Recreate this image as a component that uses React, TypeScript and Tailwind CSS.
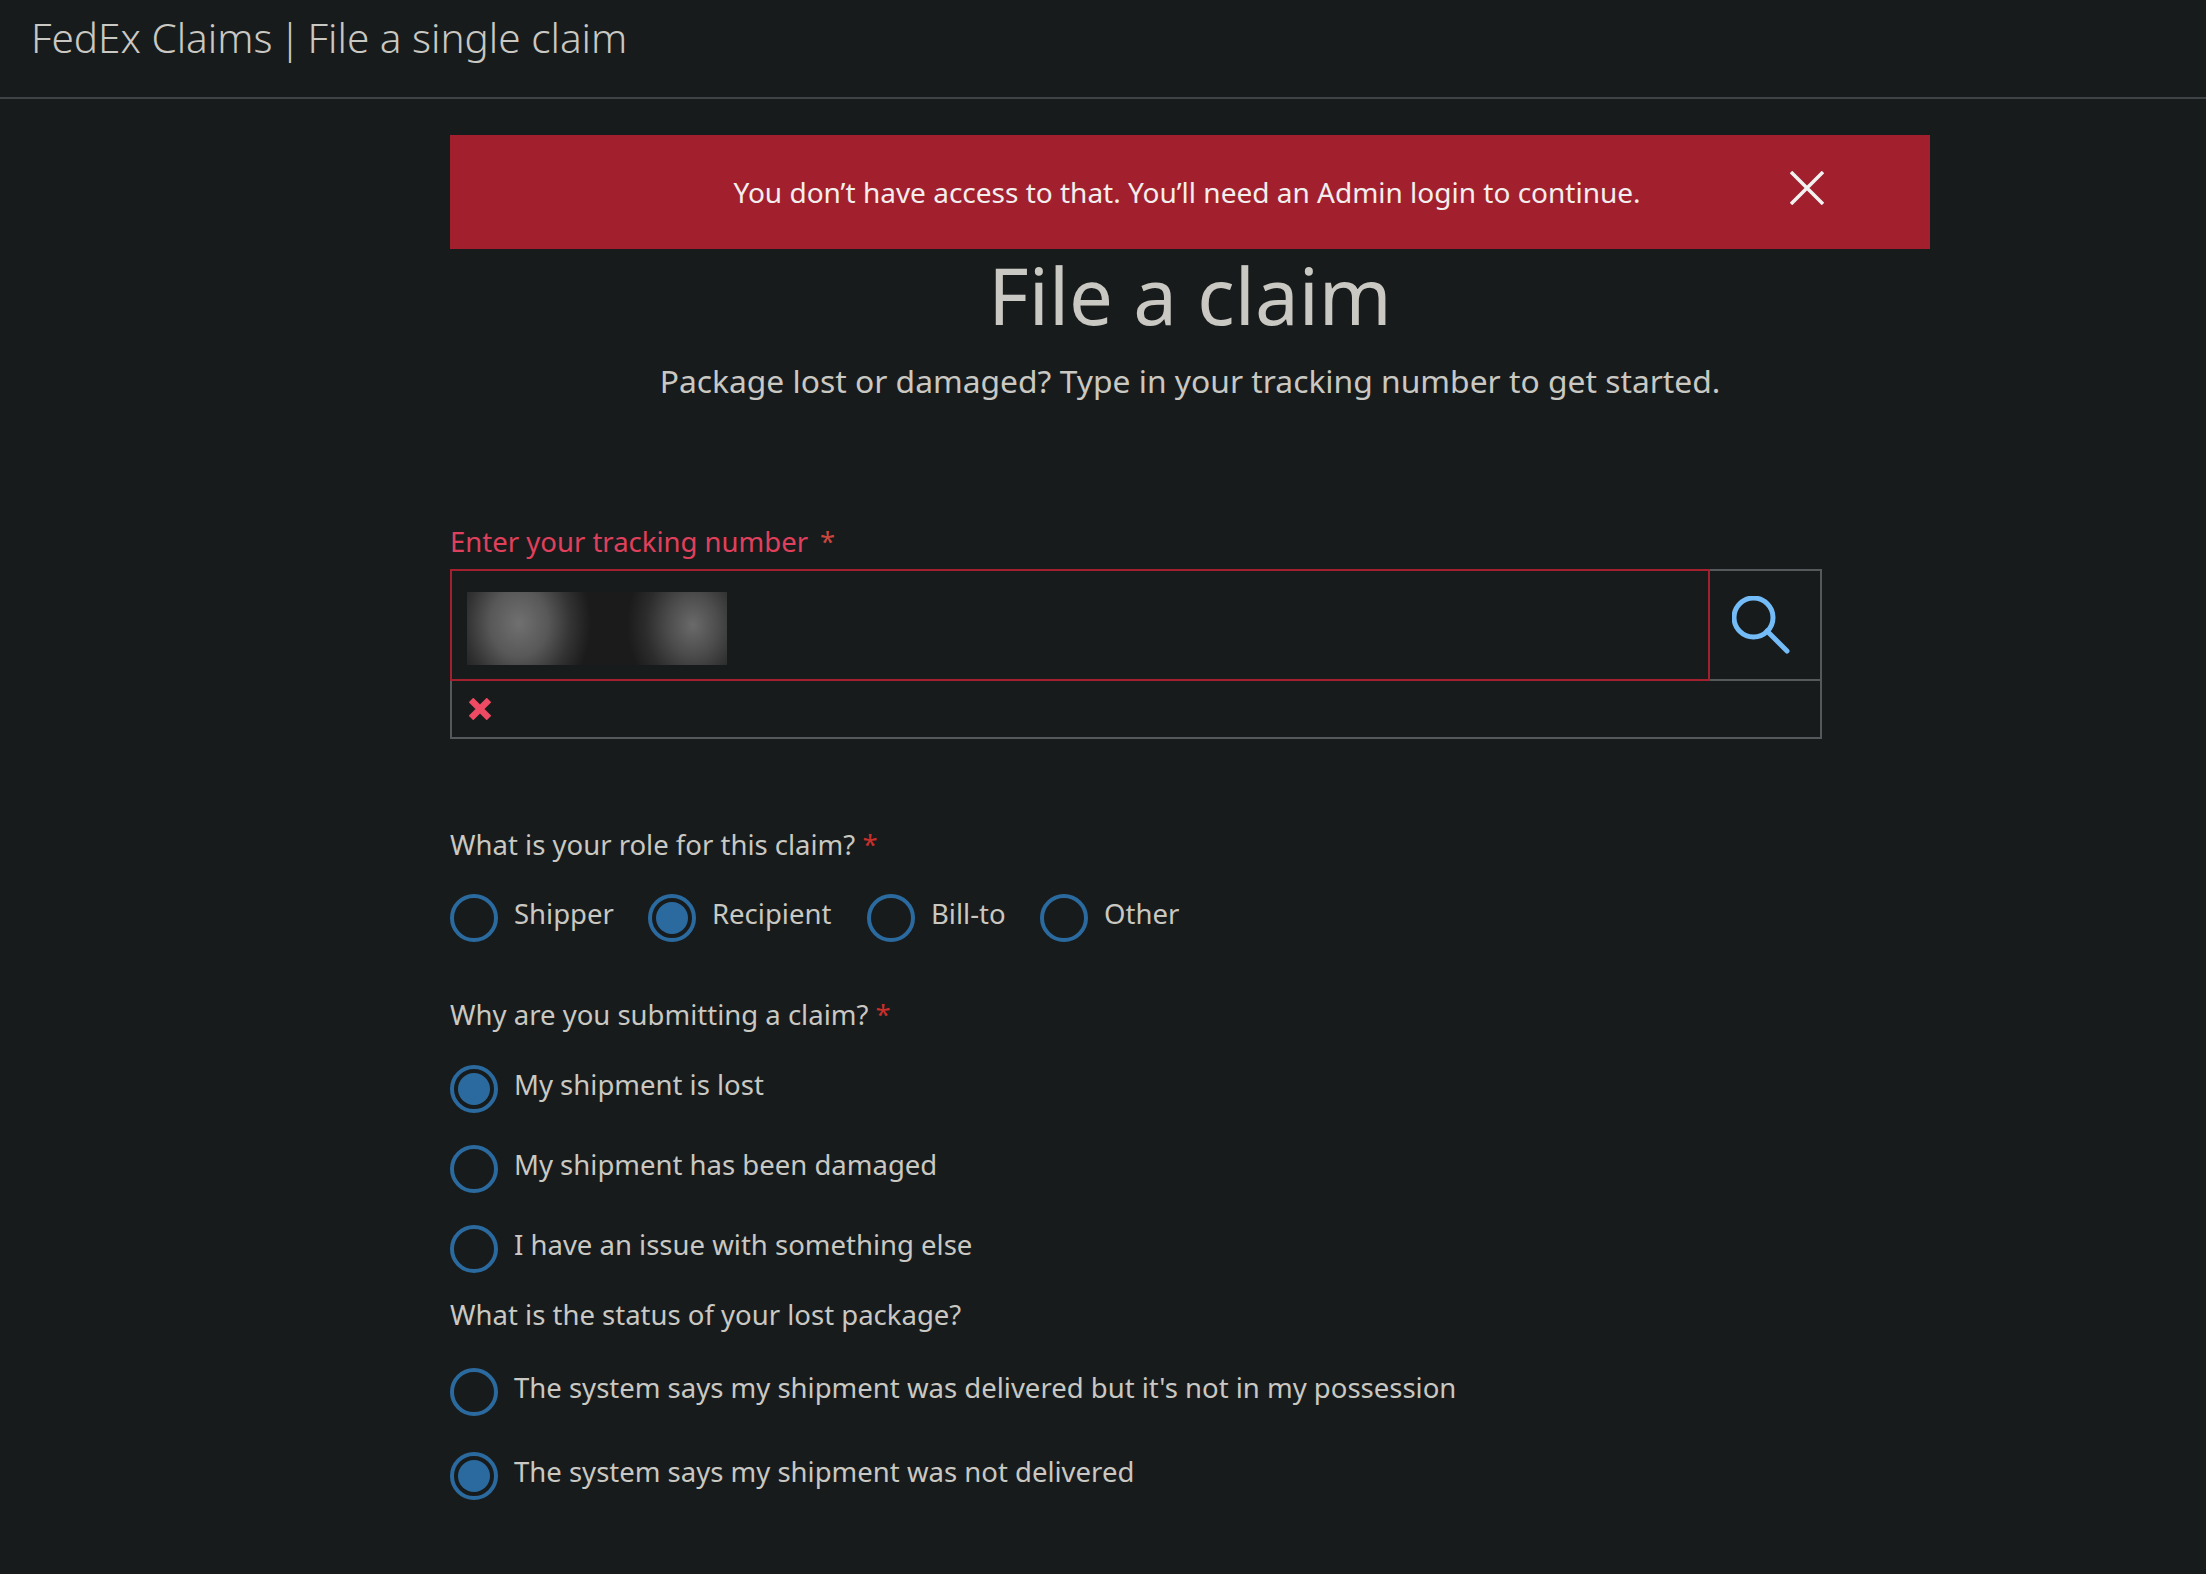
// App.tsx
const font = "font-['Noto_Sans',sans-serif]";

function Radio({ label, checked = false, className = "" }: { label: string; checked?: boolean; className?: string }) {
  return (
    <label className={`flex items-start gap-4 ${className}`}>
      <span className="flex h-12 w-12 shrink-0 items-center justify-center rounded-full border-4 border-[#2b6a9f]">
        {checked && <span className="h-8 w-8 rounded-full bg-[#2b6a9f]" />}
      </span>
      <span className="text-[27.5px] leading-10">{label}</span>
    </label>
  );
}

export default function App() {
  return (
    <div className={`${font} min-h-[1574px] bg-[#181b1c] text-[#c9c8c2]`}>
      <header className="h-[99px] border-b-2 border-[#3f4345] pl-[31px] pt-[15px]">
        <h1 className="text-[40.5px] font-light leading-[46px]">
          FedEx Claims<span className="mx-[-4px]"> | </span>File a single claim
        </h1>
      </header>

      <main className="ml-[450px] w-[1480px] pt-[36px]">
        <div className="relative flex h-[114px] items-center justify-center bg-[#a2202d] pr-[6px] text-[28px] text-[#f2eeee]">
          You don’t have access to that. You’ll need an Admin login to continue.
          <svg className="absolute left-[1340px] top-[36px]" width="34" height="34" viewBox="0 0 34 34" fill="none" stroke="#f2f2f2" strokeWidth="3.5">
            <path d="M1 1 33 33M33 1 1 33" />
          </svg>
        </div>

        <div className="text-center">
          <h2 className="text-[78px] leading-[92px]">File a claim</h2>
          <p className="mt-[18px] text-[31.8px] leading-[44px]">Package lost or damaged? Type in your tracking number to get started.</p>
        </div>

        <div className="mt-[119px] w-[1372px]">
          <div className="flex h-10 items-center text-[27.5px] leading-10 text-[#e0405c]">
            Enter your tracking number
            <span className="ml-3 text-[#c9473c]">*</span>
          </div>
          <div className="mt-[7px] flex h-[112px]">
            <div className="h-full w-[1260px] border-2 border-[#a3212e] pl-[15px] pt-[21px]">
              <div className="h-[73px] w-[260px] bg-[#1c1b1c] bg-[radial-gradient(ellipse_72px_85px_at_52px_31px,#707070_0,#585858_40%,#333_72%,transparent_100%),radial-gradient(ellipse_66px_80px_at_226px_33px,#6a6a6a_0,#4c4c4c_38%,#2c2c2c_72%,transparent_100%)]" />
            </div>
            <button className="flex h-full w-[112px] items-center justify-center border-y-2 border-r-2 border-[#55595b] pr-[8px]">
              <svg width="58" height="58" viewBox="0 0 58 58" fill="none" stroke="#73bcf7" strokeWidth="5" strokeLinecap="round">
                <circle cx="21.5" cy="21.5" r="19.5" />
                <path d="M35 35 55 55" />
              </svg>
            </button>
          </div>
          <div className="flex h-[58px] items-center border-x-2 border-b-2 border-[#55595b] pl-[17px]">
            <svg width="22" height="22" viewBox="0 0 22 22" stroke="#ef4a63" strokeWidth="6.5">
              <path d="M2 2 20 20M20 2 2 20" />
            </svg>
          </div>
        </div>

        <div className="mt-[86px] h-10 text-[27.5px] leading-10">
          What is your role for this claim? <span className="text-[#c9302c]">*</span>
        </div>
        <div className="mt-[29px] flex">
          <Radio className="w-[198px]" label="Shipper" />
          <Radio className="w-[219px]" label="Recipient" checked />
          <Radio className="w-[173px]" label="Bill-to" />
          <Radio label="Other" />
        </div>

        <div className="mt-[53px] h-10 text-[27.5px] leading-10">
          Why are you submitting a claim? <span className="text-[#c9302c]">*</span>
        </div>
        <div className="mt-[30px] flex flex-col gap-[32px]">
          <Radio label="My shipment is lost" checked />
          <Radio label="My shipment has been damaged" />
          <Radio label="I have an issue with something else" />
        </div>

        <div className="mt-[22px] h-10 text-[27.5px] leading-10">What is the status of your lost package?</div>
        <div className="mt-[33px] flex flex-col gap-[36px]">
          <Radio label="The system says my shipment was delivered but it's not in my possession" />
          <Radio label="The system says my shipment was not delivered" checked />
        </div>
      </main>
    </div>
  );
}
